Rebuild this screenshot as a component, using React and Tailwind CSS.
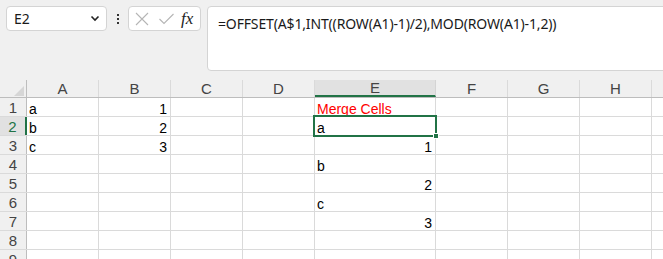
import React from "react";

const cols = ["A", "B", "C", "D", "E", "F", "G", "H", ""];
const widths = ["w-[72px]", "w-[72px]", "w-[72px]", "w-[72px]", "w-[121px]", "w-[72px]", "w-[72px]", "w-[72px]", "w-[72px]"];

// cell content: [text, align, color]
const data = {
  1: { A: ["a"], B: ["1", "r"], E: ["Merge Cells", "l", "text-[#ff0000]"] },
  2: { A: ["b"], B: ["2", "r"], E: ["a"] },
  3: { A: ["c"], B: ["3", "r"], E: ["1", "r"] },
  4: { E: ["b"] },
  5: { E: ["2", "r"] },
  6: { E: ["c"] },
  7: { E: ["3", "r"] },
  8: {},
  9: {},
};

const Cell = ({ w, cell }) => (
  <div
    className={`${w} shrink-0 h-full border-r border-[#dadada] flex items-end px-[2px] text-[14px] leading-[14px] ${
      cell && cell[1] === "r" ? "justify-end pr-[3px]" : ""
    } ${cell && cell[2] ? cell[2] : "text-black"}`}
  >
    {cell ? <span className="whitespace-nowrap">{cell[0]}</span> : null}
  </div>
);

const App = () => {
  return (
    <div className="w-[663px] h-[259px] overflow-hidden bg-white font-['Liberation_Sans',Arial,sans-serif]">
      {/* formula bar area */}
      <div className="h-[80px] bg-[#f0f0f0] flex items-start pt-[6px] pl-[6px] overflow-hidden">
        <div className="w-[101px] h-[25px] shrink-0 bg-white border border-[#d4d4d4] rounded-[4px] flex items-center justify-between pl-[7px] pr-[6px]">
          <span className="text-[14px] text-[#1a1a1a] font-['Noto_Sans',sans-serif]">E2</span>
          <svg width="10" height="7" viewBox="0 0 10 7">
            <path d="M1.5 1.5 L5 5 L8.5 1.5" fill="none" stroke="#222" strokeWidth="1.6" />
          </svg>
        </div>
        <div className="w-[21px] h-[25px] shrink-0 flex flex-col items-center justify-center gap-[2px]">
          <span className="w-[2px] h-[2px] bg-[#333]" />
          <span className="w-[2px] h-[2px] bg-[#333]" />
          <span className="w-[2px] h-[2px] bg-[#333]" />
        </div>
        <div className="w-[73px] h-[25px] shrink-0 bg-white border border-[#d4d4d4] rounded-[4px] flex items-center pl-[5px]">
          <svg width="16" height="16" viewBox="0 0 16 16" className="mr-[8px]">
            <path d="M2 2 L14 14 M14 2 L2 14" stroke="#b5b5b5" strokeWidth="1.1" fill="none" />
          </svg>
          <svg width="17" height="16" viewBox="0 0 17 16" className="mr-[6px]">
            <path d="M1.5 8 L6 12.5 L15.5 3" stroke="#b5b5b5" strokeWidth="1.1" fill="none" />
          </svg>
          <span className="italic text-[17px] leading-none text-[#222] font-['Liberation_Serif',serif]">
            fx
          </span>
        </div>
        <div className="ml-[6px] h-[65px] flex-1 min-w-[470px] bg-white border border-[#d4d4d4] rounded-[4px] pl-[10px] pt-[5px]">
          <span className="text-[14px] text-[#1a1a1a] whitespace-nowrap font-['Noto_Sans',sans-serif] tracking-[-0.15px]">
            =OFFSET(A$1,INT((ROW(A1)-1)/2),MOD(ROW(A1)-1,2))
          </span>
        </div>
      </div>

      {/* column headers */}
      <div className="h-[18px] flex bg-[#f0f0f0] border-b border-[#bdbdbd]">
        <div className="w-[27px] shrink-0 h-full border-r border-[#bdbdbd] relative">
          <svg width="10" height="10" viewBox="0 0 10 10" className="absolute right-[2px] bottom-[1px]">
            <path d="M10 0 L10 10 L0 10 Z" fill="#d6d6d6" />
          </svg>
        </div>
        {cols.map((c, i) => (
          <div
            key={i}
            className={`${widths[i]} shrink-0 h-full flex items-center justify-center text-[15px] leading-none text-[#444] border-r ${
              c === "E"
                ? "bg-[#e1e1e1] border-[#d4d4d4] border-b-2 border-b-[#217346] -mb-px"
                : "border-[#dadada]"
            }`}
          >
            {c}
          </div>
        ))}
      </div>

      {/* rows */}
      {Object.keys(data).map((r) => (
        <div key={r} className="h-[19px] flex border-b border-[#dadada]">
          <div
            className={`w-[27px] shrink-0 h-full flex items-center justify-center text-[15px] leading-none ${
              r === "2"
                ? "bg-[#e1e1e1] border-r-2 border-[#217346] text-[#217346]"
                : "bg-[#f0f0f0] border-r border-[#bdbdbd] text-[#444]"
            }`}
          >
            {r}
          </div>
          {cols.map((c, i) =>
            r === "2" && c === "E" ? (
              <div key={i} className={`${widths[i]} shrink-0 h-full relative`}>
                <div className="absolute -left-[2px] -top-[2px] right-[-1px] bottom-[-2px] border-2 border-[#217346] flex items-end px-[2px] text-[14px] leading-[14px]">
                  a
                </div>
                <div className="absolute right-[-3px] bottom-[-4px] w-[6px] h-[6px] bg-[#217346] border border-white" />
              </div>
            ) : (
              <Cell key={i} w={widths[i]} cell={data[r][c]} />
            )
          )}
        </div>
      ))}
    </div>
  );
};

export default App;
